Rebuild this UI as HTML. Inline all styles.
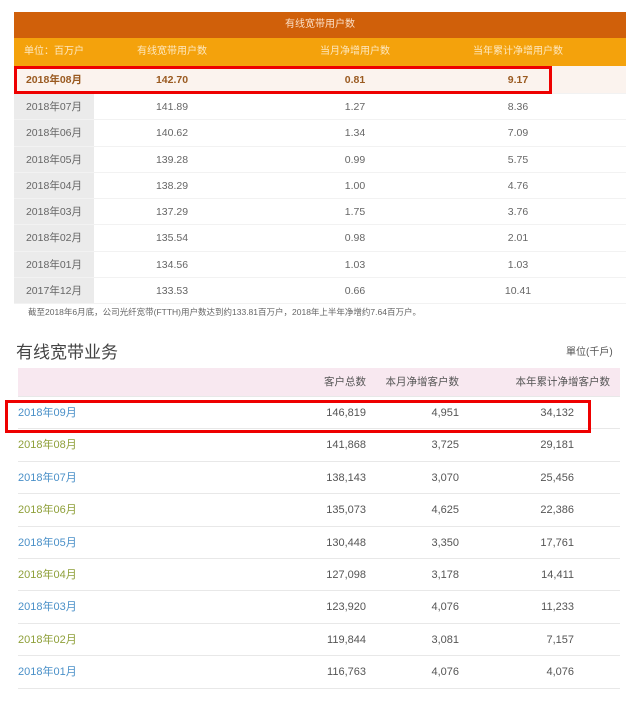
<!DOCTYPE html>
<html><head><meta charset="utf-8"><style>
*{margin:0;padding:0;box-sizing:border-box}
body{width:640px;height:713px;background:#fff;position:relative;overflow:hidden;font-family:"Liberation Sans","Noto Sans CJK SC",sans-serif;color:#555}
.a{position:absolute}
.t1{left:14px;top:12px;width:612px;height:26px;background:#d0600a;color:#fbe0c8;font-size:10px;text-align:center;line-height:26px}
.t2{left:14px;top:38px;width:612px;height:28px;background:#f4a20c;color:#fde8c0;font-size:10px;line-height:28px}
.r{left:14px;width:612px;height:26.25px;font-size:10.5px;color:#666;line-height:26px;border-bottom:1px solid #f2f2f2}
.r span,.t2 span{position:absolute;text-align:center}
.c0{left:0;width:80px}.c1{left:108px;width:100px}.c2{left:291px;width:100px}.c3{left:454px;width:100px}
.g{position:absolute;left:0;top:0;width:80px;height:100%;background:#ebebeb}
.b{left:18px;width:602px;height:32.4px;border-bottom:1px solid #e8e8e8;font-size:11px;line-height:32px;color:#555}
.b span{position:absolute;text-align:right}
.d0{left:0;text-align:left!important}
.n1{right:254px}.n2{right:161px}.n3{right:46px}
.bl{color:#4a90c8}.gr{color:#8fa03a}
</style></head><body>
<div class="a t1">有线宽带用户数</div>
<div class="a t2"><span class="c0">单位：百万户</span><span class="c1">有线宽带用户数</span><span class="c2">当月净增用户数</span><span class="c3">当年累计净增用户数</span></div>
<div class="a r" style="top:66px;height:28px;background:#fbf3ee;font-weight:bold;color:#9a5a20;line-height:28px"><span class="c0">2018年08月</span><span class="c1">142.70</span><span class="c2">0.81</span><span class="c3">9.17</span></div>
<div class="a r" style="top:94px"><div class="g"></div><span class="c0">2018年07月</span><span class="c1">141.89</span><span class="c2">1.27</span><span class="c3">8.36</span></div>
<div class="a r" style="top:120.25px"><div class="g"></div><span class="c0">2018年06月</span><span class="c1">140.62</span><span class="c2">1.34</span><span class="c3">7.09</span></div>
<div class="a r" style="top:146.5px"><div class="g"></div><span class="c0">2018年05月</span><span class="c1">139.28</span><span class="c2">0.99</span><span class="c3">5.75</span></div>
<div class="a r" style="top:172.75px"><div class="g"></div><span class="c0">2018年04月</span><span class="c1">138.29</span><span class="c2">1.00</span><span class="c3">4.76</span></div>
<div class="a r" style="top:199px"><div class="g"></div><span class="c0">2018年03月</span><span class="c1">137.29</span><span class="c2">1.75</span><span class="c3">3.76</span></div>
<div class="a r" style="top:225.25px"><div class="g"></div><span class="c0">2018年02月</span><span class="c1">135.54</span><span class="c2">0.98</span><span class="c3">2.01</span></div>
<div class="a r" style="top:251.5px"><div class="g"></div><span class="c0">2018年01月</span><span class="c1">134.56</span><span class="c2">1.03</span><span class="c3">1.03</span></div>
<div class="a r" style="top:277.75px"><div class="g"></div><span class="c0">2017年12月</span><span class="c1">133.53</span><span class="c2">0.66</span><span class="c3">10.41</span></div>
<div class="a" style="left:28px;top:306px;font-size:8.5px;color:#666">截至2018年6月底，公司光纤宽带(FTTH)用户数达到约133.81百万户，2018年上半年净增约7.64百万户。</div>
<div class="a" style="left:16px;top:338px;font-size:17px;color:#444">有线宽带业务</div>
<div class="a" style="left:566px;top:343px;font-size:10px;color:#555">單位(千戶)</div>
<div class="a b" style="top:368px;height:29px;background:#f8e8f0;line-height:29px;font-size:10.5px"><span class="n1">客户总数</span><span class="n2">本月净增客户数</span><span class="n3" style="right:10px">本年累计净增客户数</span></div>
<div class="a b" style="top:397px"><span class="d0 bl">2018年09月</span><span class="n1">146,819</span><span class="n2">4,951</span><span class="n3">34,132</span></div>
<div class="a b" style="top:429.4px"><span class="d0 gr">2018年08月</span><span class="n1">141,868</span><span class="n2">3,725</span><span class="n3">29,181</span></div>
<div class="a b" style="top:461.8px"><span class="d0 bl">2018年07月</span><span class="n1">138,143</span><span class="n2">3,070</span><span class="n3">25,456</span></div>
<div class="a b" style="top:494.2px"><span class="d0 gr">2018年06月</span><span class="n1">135,073</span><span class="n2">4,625</span><span class="n3">22,386</span></div>
<div class="a b" style="top:526.6px"><span class="d0 bl">2018年05月</span><span class="n1">130,448</span><span class="n2">3,350</span><span class="n3">17,761</span></div>
<div class="a b" style="top:559px"><span class="d0 gr">2018年04月</span><span class="n1">127,098</span><span class="n2">3,178</span><span class="n3">14,411</span></div>
<div class="a b" style="top:591.4px"><span class="d0 bl">2018年03月</span><span class="n1">123,920</span><span class="n2">4,076</span><span class="n3">11,233</span></div>
<div class="a b" style="top:623.8px"><span class="d0 gr">2018年02月</span><span class="n1">119,844</span><span class="n2">3,081</span><span class="n3">7,157</span></div>
<div class="a b" style="top:656.2px"><span class="d0 bl">2018年01月</span><span class="n1">116,763</span><span class="n2">4,076</span><span class="n3">4,076</span></div>
<div class="a" style="left:14px;top:66px;width:538px;height:28px;border:3px solid #e00"></div>
<div class="a" style="left:5px;top:400px;width:586px;height:33px;border:3px solid #e00"></div>
</body></html>
